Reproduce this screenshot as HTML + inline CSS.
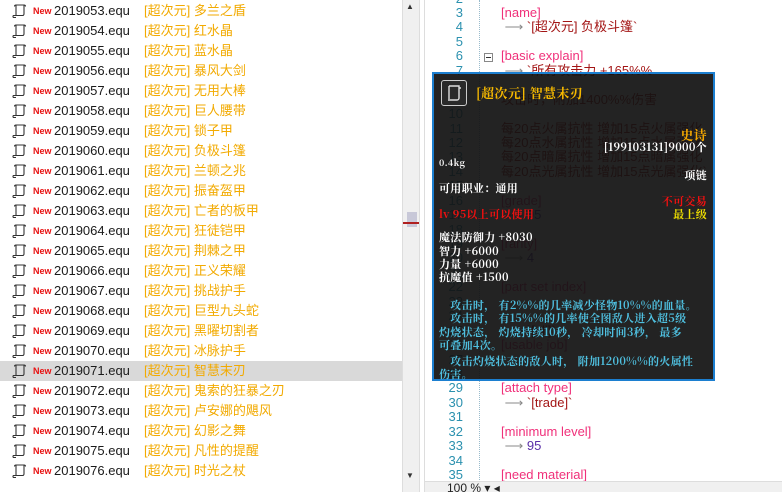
<!DOCTYPE html>
<html><head><meta charset="utf-8"><style>
*{margin:0;padding:0;box-sizing:border-box}
body{width:782px;height:492px;overflow:hidden;background:#fff;font-family:"Liberation Sans","Noto Sans CJK SC",sans-serif;position:relative}
.row{position:absolute;left:0;width:402px;height:20px;font-size:13px;line-height:20px;color:#1a1a1a}
.row.sel{background:#d9d9d9}
.ic{position:absolute;left:11px;top:2px}
.new{position:absolute;left:33px;top:0;font-size:9px;font-weight:bold;color:#e81010}
.fn{position:absolute;left:54px}
.cn{position:absolute;left:144px;color:#f2aa00}
.ln{position:absolute;width:40px;left:423px;text-align:right;color:#2b91af;font-size:13px;line-height:14px}
.tx{position:absolute;font-size:13px;line-height:14px;white-space:nowrap}
.k{color:#f0307a}.s{color:#a31515}.n{color:#5a2fa8}.a{color:#888}
.tt{position:absolute;left:432px;top:72px;width:283px;height:309px;border:2px solid #1c7fd0;background:rgba(18,18,18,.93)}
.t{position:absolute;font-family:"Noto Serif CJK SC","Liberation Serif",serif;font-weight:bold;font-size:11px;line-height:13px;white-space:nowrap;color:#fff;letter-spacing:.3px}
.r{right:6px;text-align:right}
.cy{color:#4fc0e0}
</style></head><body>
<div id="list"></div>
<div style="position:absolute;left:402px;top:0;width:18px;height:492px;background:#f0f0f0;border-left:1px solid #ddd;border-right:1px solid #ddd"></div>
<div style="position:absolute;left:406px;top:2px;font-size:8px;color:#333">▲</div>
<div style="position:absolute;left:406px;top:471px;font-size:8px;color:#333">▼</div>
<div style="position:absolute;left:407px;top:212px;width:10px;height:15px;background:#c8c8d8"></div>
<div style="position:absolute;left:403px;top:222px;width:16px;height:2px;background:#b02020"></div>
<div style="position:absolute;left:424px;top:0;width:1px;height:492px;background:#ddd"></div>
<div style="position:absolute;left:479px;top:0;height:480px;border-left:1px dotted #9bc"></div>
<div id="ed"></div>
<div style="position:absolute;left:484px;top:53px;width:9px;height:9px;border:1px solid #888;background:#fff"></div>
<div style="position:absolute;left:486px;top:57px;width:5px;height:1px;background:#333"></div>
<div style="position:absolute;left:425px;top:481px;width:357px;height:11px;background:#f0f0f0;border-top:1px solid #ddd"></div>
<div style="position:absolute;left:447px;top:482px;font-size:12px;line-height:12px;color:#222">100 % ▾ ◂</div>
<div class="tt">
<div style="position:absolute;left:7px;top:6px;width:26px;height:26px;border:1px solid #ccc;border-radius:3px;background:#2a2a2a"><svg width="24" height="24" viewBox="0 0 24 24"><path d="M7 5h10v12a2 2 0 0 1-2 2H6M7 5v13M17 7h2" stroke="#ddd" stroke-width="1.4" fill="none"/></svg></div>
<div class="t" style="left:42px;top:12px;font-size:13px;color:#f5b800">[超次元] 智慧末刃</div>
<div class="t r" style="top:54px;font-size:13px;color:#f5a800">史诗</div>
<div class="t r" style="top:67px">[199103131]9000个</div>
<div class="t" style="left:5px;top:82px;font-size:9px">0.4kg</div>
<div class="t r" style="top:95px">项链</div>
<div class="t" style="left:5px;top:108px">可用职业：通用</div>
<div class="t r" style="top:121px;color:#f01010">不可交易</div>
<div class="t" style="left:5px;top:134px;color:#f01010">lv 95以上可以使用</div>
<div class="t r" style="top:134px;color:#f0e000">最上级</div>
<div class="t" style="left:5px;top:157px">魔法防御力 +8030</div>
<div class="t" style="left:5px;top:171px">智力 +6000</div>
<div class="t" style="left:5px;top:184px">力量 +6000</div>
<div class="t" style="left:5px;top:197px">抗魔值 +1500</div>
<div class="t cy" style="left:5px;top:225px">　攻击时， 有2%%的几率减少怪物10%%的血量。</div>
<div class="t cy" style="left:5px;top:238px">　攻击时， 有15%%的几率使全图敌人进入超5级</div>
<div class="t cy" style="left:5px;top:252px">灼烧状态， 灼烧持续10秒， 冷却时间3秒， 最多</div>
<div class="t cy" style="left:5px;top:265px">可叠加4次。</div>
<div class="t cy" style="left:5px;top:281px">　攻击灼烧状态的敌人时， 附加1200%%的火属性</div>
<div class="t cy" style="left:5px;top:294px">伤害。</div>
</div>
<script>
var names=["多兰之盾","红水晶","蓝水晶","暴风大剑","无用大棒","巨人腰带","锁子甲","负极斗篷","兰顿之兆","振奋盔甲","亡者的板甲","狂徒铠甲","荆棘之甲","正义荣耀","挑战护手","巨型九头蛇","黑曜切割者","冰脉护手","智慧末刃","鬼索的狂暴之刃","卢安娜的飓风","幻影之舞","凡性的提醒","时光之杖"];
var icon='<svg class="ic" width="16" height="16" viewBox="0 0 16 16"><path d="M5 2h8M5 2a1.5 1.5 0 0 0-1.5 1.5M5 2v11M13 2v9a1.5 1.5 0 0 1-1.5 1.5H2.5a1.2 1.2 0 0 0 0 2H5M13 2a1.5 1.5 0 0 1 1.5 1.5" stroke="#333" stroke-width="1.1" fill="none"/></svg>';
var h='';
for(var i=0;i<24;i++){var n=2019053+i;h+='<div class="row'+(n==2019071?' sel':'')+'" style="top:'+(1+i*20)+'px">'+icon+'<span class="new">New</span><span class="fn">'+n+'.equ</span><span class="cn">[超次元] '+names[i]+'</span></div>';}
document.getElementById('list').innerHTML=h;
var L={3:'<span class="k">[name]</span>',4:'<span class="a">&nbsp;⟶ </span><span class="s">`[超次元] 负极斗篷`</span>',6:'<span class="k">[basic explain]</span>',7:'<span class="a">&nbsp;⟶ </span><span class="s">`所有攻击力 +165%%</span>',9:'<span class="s">攻击时，附加1400%%伤害</span>',11:'<span class="s">每20点火属抗性 增加15点火属强化</span>',12:'<span class="s">每20点水属抗性 增加15点水属强化</span>',13:'<span class="s">每20点暗属抗性 增加15点暗属强化</span>',14:'<span class="s">每20点光属抗性 增加15点光属强化`</span>',16:'<span class="k">[grade]</span>',17:'<span class="a">&nbsp;⟶ </span><span class="n">95</span>',19:'<span class="k">[rarity]</span>',20:'<span class="a">&nbsp;⟶ </span><span class="n">4</span>',22:'<span class="k">[part set index]</span>',25:'<span class="a">&nbsp;⟶ </span><span class="s">`[all]`</span>',26:'<span class="k">[usable job]</span>',29:'<span class="k">[attach type]</span>',30:'<span class="a">&nbsp;⟶ </span><span class="s">`[trade]`</span>',32:'<span class="k">[minimum level]</span>',33:'<span class="a">&nbsp;⟶ </span><span class="n">95</span>',35:'<span class="k">[need material]</span>'};
var e='';
for(var k=2;k<=35;k++){var y=Math.round(13+(k-3)*14.44-7);e+='<div class="ln" style="top:'+y+'px">'+k+'</div>';if(L[k])e+='<div class="tx" style="left:501px;top:'+y+'px">'+L[k]+'</div>';}
document.getElementById('ed').innerHTML=e;
</script>
</body></html>
